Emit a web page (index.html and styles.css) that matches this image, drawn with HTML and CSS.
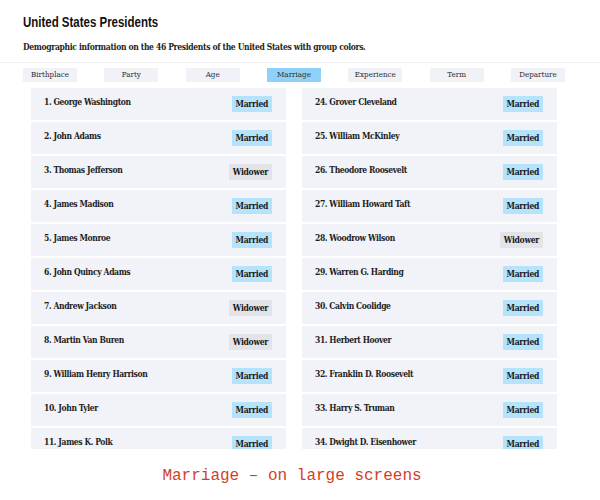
FILE: index.html
```html
<!DOCTYPE html>
<html lang="en">
<head>
<meta charset="utf-8">
<title>United States Presidents</title>
<link rel="stylesheet" href="styles.css">
</head>
<body>
<header class="header">
  <h1 class="title">United States Presidents</h1>
  <p class="subtitle">Demographic information on the 46 Presidents of the United States with group colors.</p>
</header>
<nav class="tabs">
  <span class="tab">Birthplace</span>
  <span class="tab">Party</span>
  <span class="tab">Age</span>
  <span class="tab tab-active">Marriage</span>
  <span class="tab">Experience</span>
  <span class="tab">Term</span>
  <span class="tab">Departure</span>
</nav>
<main class="list">
  <div class="card"><span class="name">1. George Washington</span><span class="badge married">Married</span></div>
  <div class="card"><span class="name">2. John Adams</span><span class="badge married">Married</span></div>
  <div class="card"><span class="name">3. Thomas Jefferson</span><span class="badge widower">Widower</span></div>
  <div class="card"><span class="name">4. James Madison</span><span class="badge married">Married</span></div>
  <div class="card"><span class="name">5. James Monroe</span><span class="badge married">Married</span></div>
  <div class="card"><span class="name">6. John Quincy Adams</span><span class="badge married">Married</span></div>
  <div class="card"><span class="name">7. Andrew Jackson</span><span class="badge widower">Widower</span></div>
  <div class="card"><span class="name">8. Martin Van Buren</span><span class="badge widower">Widower</span></div>
  <div class="card"><span class="name">9. William Henry Harrison</span><span class="badge married">Married</span></div>
  <div class="card"><span class="name">10. John Tyler</span><span class="badge married">Married</span></div>
  <div class="card"><span class="name">11. James K. Polk</span><span class="badge married">Married</span></div>
  <div class="card"><span class="name">24. Grover Cleveland</span><span class="badge married">Married</span></div>
  <div class="card"><span class="name">25. William McKinley</span><span class="badge married">Married</span></div>
  <div class="card"><span class="name">26. Theodore Roosevelt</span><span class="badge married">Married</span></div>
  <div class="card"><span class="name">27. William Howard Taft</span><span class="badge married">Married</span></div>
  <div class="card"><span class="name">28. Woodrow Wilson</span><span class="badge widower">Widower</span></div>
  <div class="card"><span class="name">29. Warren G. Harding</span><span class="badge married">Married</span></div>
  <div class="card"><span class="name">30. Calvin Coolidge</span><span class="badge married">Married</span></div>
  <div class="card"><span class="name">31. Herbert Hoover</span><span class="badge married">Married</span></div>
  <div class="card"><span class="name">32. Franklin D. Roosevelt</span><span class="badge married">Married</span></div>
  <div class="card"><span class="name">33. Harry S. Truman</span><span class="badge married">Married</span></div>
  <div class="card"><span class="name">34. Dwight D. Eisenhower</span><span class="badge married">Married</span></div>
</main>
<p class="caption">Marriage – on large screens</p>
</body>
</html>
```
FILE: styles.css
```css
* { box-sizing: border-box; }

body {
  margin: 0;
  background: #ffffff;
  color: #1d1d1f;
  font-family: "DejaVu Serif", "Liberation Serif", serif;
  font-stretch: condensed;
}

.header {
  padding: 14px 23px 9px;
  border-bottom: 1px solid #f2f2f4;
}

.title {
  margin: 0;
  font-family: "Liberation Sans", Arial, sans-serif;
  font-size: 15.5px;
  line-height: 16px;
  font-weight: 700;
  color: #111;
  transform: scaleX(0.74);
  transform-origin: left center;
}

.subtitle {
  margin: 11px 0 0;
  font-size: 8.5px;
  line-height: 12px;
  font-weight: 700;
  letter-spacing: -0.35px;
  color: #1f1f22;
}

.tabs {
  display: flex;
  justify-content: space-between;
  padding: 0 35px 0 23px;
  margin-top: 5px;
}

.tab {
  width: 54px;
  height: 14px;
  background: #f0f2f7;
  font-size: 8px;
  line-height: 14px;
  text-align: center;
  color: #2e2e33;
}

.tab-active {
  background: #8ed1f9;
}

.list {
  display: grid;
  grid-template-columns: 255px 255px;
  grid-template-rows: repeat(11, 32px);
  grid-auto-flow: column;
  column-gap: 16px;
  row-gap: 2px;
  margin: 6px 0 0 31px;
  height: 361px;
  overflow: hidden;
}

.card {
  display: flex;
  justify-content: space-between;
  align-items: flex-start;
  background: #f1f3f8;
  padding: 8px 14px 0 13px;
}

.name {
  font-size: 8.5px;
  line-height: 13px;
  font-weight: 700;
  letter-spacing: -0.4px;
  color: #1d1d1f;
}

.badge {
  height: 16px;
  padding: 0 4px;
  font-size: 8.5px;
  line-height: 16px;
  font-weight: 700;
  letter-spacing: -0.3px;
  color: #1a1a1d;
}

.married { background: #b5e3fb; }
.widower { background: #e2e4e8; }

.caption {
  margin: 17px 0 0;
  text-align: center;
  padding-right: 16px;
  font-family: "Liberation Mono", monospace;
  font-size: 16px;
  line-height: 20px;
  color: #d4401f;
}
```
